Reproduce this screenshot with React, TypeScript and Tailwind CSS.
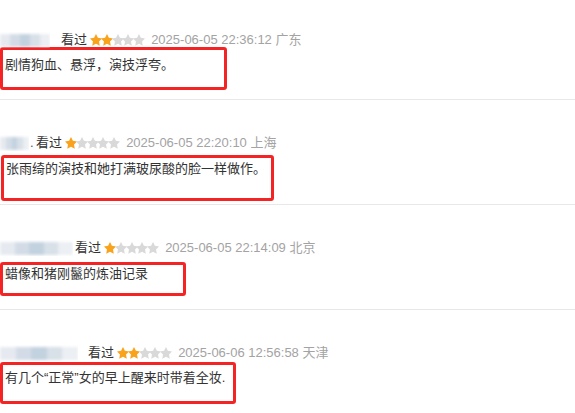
import type { ReactNode } from "react";

type Review = {
  nameWidth: number;
  nameGap: number;
  dot?: boolean;
  rating: number;
  time: string;
  place: string;
  text: string;
  boxClass: string;
  metaClass: string;
  rowClass: string;
};

const reviews: Review[] = [
  {
    nameWidth: 50,
    nameGap: 61,
    rating: 2,
    time: "2025-06-05 22:36:12",
    place: "广东",
    text: "剧情狗血、悬浮，演技浮夸。",
    rowClass: "h-[100px]",
    metaClass: "mt-[32px]",
    boxClass: "-mt-px h-[43px] w-[227px] pt-[6px]",
  },
  {
    nameWidth: 29,
    nameGap: 36,
    dot: true,
    rating: 1,
    time: "2025-06-05 22:20:10",
    place: "上海",
    text: "张雨绮的演技和她打满玻尿酸的脸一样做作。",
    rowClass: "h-[105px]",
    metaClass: "mt-[35px]",
    boxClass: "mt-[4px] ml-px h-[46px] w-[273px] pt-[2px]",
  },
  {
    nameWidth: 73,
    nameGap: 75,
    rating: 1,
    time: "2025-06-05 22:14:09",
    place: "北京",
    text: "蜡像和猪刚鬣的炼油记录",
    rowClass: "h-[105px]",
    metaClass: "mt-[35px]",
    boxClass: "mt-[6px] h-[34px] w-[186px] pt-0",
  },
  {
    nameWidth: 78,
    nameGap: 88,
    rating: 2,
    time: "2025-06-06 12:56:58",
    place: "天津",
    text: "有几个“正常”女的早上醒来时带着全妆.",
    rowClass: "h-[103px]",
    metaClass: "mt-[35px]",
    boxClass: "mt-px h-[42px] w-[236px] pt-[4px]",
  },
];

function Star({ on }: { on: boolean }) {
  return (
    <svg viewBox="1.5 1.5 21 20.5" className="-mx-[0.7px] h-[12px] w-[12px] shrink-0" fill={on ? "#f9a21b" : "#d9d9d9"}>
      <path d="M12 1.2l3.3 6.8 7.4 1-5.4 5.2 1.3 7.4L12 18.1l-6.6 3.5 1.3-7.4L1.3 9l7.4-1z" />
    </svg>
  );
}

function BlurName({ width }: { width: number }) {
  return (
    <div className="relative h-[16px] overflow-hidden" style={{ width }}>
      <div className="absolute inset-x-0 top-[2px] flex h-[13px] blur-[1.5px]">
        <div className="flex-1 bg-[#e6eaf0]" />
        <div className="flex-1 bg-[#d3dce6]" />
        <div className="flex-1 bg-[#c3d2df]" />
        <div className="flex-1 bg-[#d8e0e8]" />
        <div className="flex-1 bg-[#eceff3]" />
      </div>
    </div>
  );
}

function Meta({ r }: { r: Review }): ReactNode {
  return (
    <div className={`flex h-4 items-center text-[13px] leading-4 ${r.metaClass}`}>
      <div className="flex items-center" style={{ width: r.nameGap }}>
        <BlurName width={r.nameWidth} />
        {r.dot && <span className="ml-px text-[#555]">.</span>}
      </div>
      <span className="text-[#333]">看过</span>
      <div className="ml-[4px] flex items-center">
        {[0, 1, 2, 3, 4].map((i) => (
          <Star key={i} on={i < r.rating} />
        ))}
      </div>
      <span className="ml-[7px] text-[#a3a3a3]">
        {r.time} {r.place}
      </span>
    </div>
  );
}

export default function App() {
  return (
    <div
      className="h-[413px] w-[575px] overflow-hidden bg-white"
      style={{ fontFamily: '"Liberation Sans", "Noto Sans CJK SC", sans-serif' }}
    >
      {reviews.map((r, idx) => (
        <div
          key={idx}
          className={`flex flex-col ${r.rowClass} ${idx < reviews.length - 1 ? "border-b border-[#e8e8e8]" : ""}`}
        >
          <Meta r={r} />
          <div className={`rounded-[3px] border-[3px] border-[#f52424] pl-[2px] ${r.boxClass}`}>
            <p className="text-[13px] leading-[18px] text-[#333]">{r.text}</p>
          </div>
        </div>
      ))}
    </div>
  );
}
